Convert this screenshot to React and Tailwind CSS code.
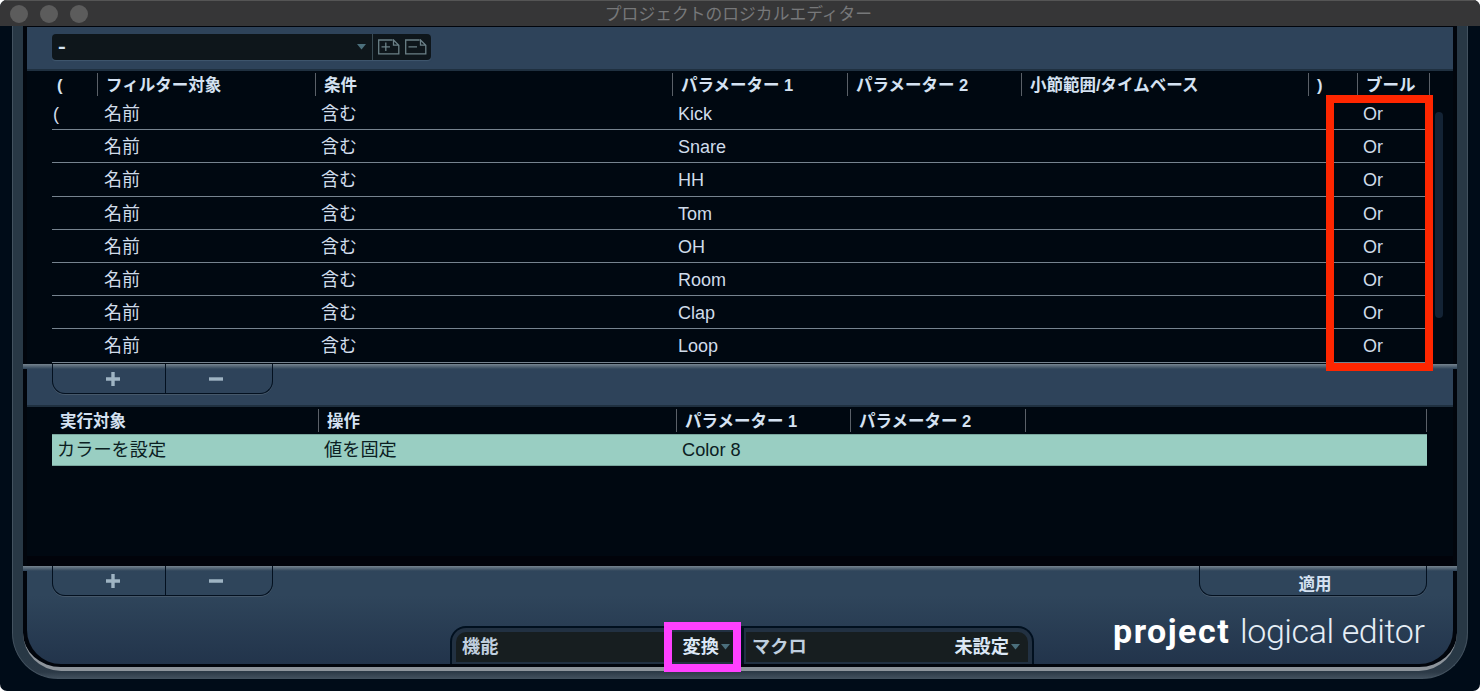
import React, { useState } from 'react';

const FILTER_ROWS = ['Kick', 'Snare', 'HH', 'Tom', 'OH', 'Room', 'Clap', 'Loop'];

const Triangle = () => (
  <svg className="shrink-0" width="9" height="6" viewBox="0 0 9 6">
    <path d="M0 0H9L4.5 5.5Z" fill="#4b6f7c" />
  </svg>
);

const PresetIcon = ({ plus }) => (
  <svg width="22" height="16" viewBox="0 0 22 16" fill="none" stroke="#6b8087" strokeWidth="1.3">
    <path d="M14.5 1H.7V14.8H20.8V6.2L15.5 1V6.2H20.8" />
    <path d="M3.5 7.8H12" />
    {plus && <path d="M7.8 3.5V12" />}
  </svg>
);

const AddRemove = ({ onAdd, onRemove }) => (
  <div className="flex w-[221px] h-[30px] rounded-b-[13px] border border-t-0 border-[#03101f] shadow-[0_1px_0_#46586a]">
    <button onClick={onAdd} className="w-[113px] border-r border-[#03101f] flex items-center justify-center pl-2">
      <svg width="14" height="14" viewBox="0 0 14 14">
        <path d="M0 7H14M7 0V14" stroke="#9fb4c3" strokeWidth="3.4" />
      </svg>
    </button>
    <button onClick={onRemove} className="flex-1 flex items-center justify-center pr-[7px]">
      <svg width="14" height="14" viewBox="0 0 14 14">
        <path d="M0 7H14" stroke="#9fb4c3" strokeWidth="3.4" />
      </svg>
    </button>
  </div>
);

// bright top edge, reaches 4px past the panel on both sides
const Highlight = () => (
  <div className="-mx-1 h-[5px] shrink-0 bg-gradient-to-b from-[#76848f] to-[#2f4459]" />
);

const HeadCell = ({ className = '', children }) => (
  <div className={`h-[23px] shrink-0 border-l border-[#5a6068] pl-2 pt-[2px] flex items-center ${className}`}>
    {children}
  </div>
);

const App = () => {
  const [rows, setRows] = useState(FILTER_ROWS);

  return (
    <div className="w-[1480px] h-[691px] bg-white overflow-hidden font-['Liberation_Sans','Noto_Sans_CJK_JP',sans-serif]">
      <div className="relative h-full flex flex-col overflow-hidden rounded-[7px] bg-[#000c18]">
        {/* Title bar */}
        <div className="h-[26px] shrink-0 flex items-center bg-[#363637] border-t border-[#555] pl-[10px]">
          <div className="flex shrink-0 w-[78px] gap-3">
            <span className="w-[18px] h-[18px] shrink-0 rounded-full bg-[#5c5c5c]" />
            <span className="w-[18px] h-[18px] shrink-0 rounded-full bg-[#5c5c5c]" />
            <span className="w-[18px] h-[18px] shrink-0 rounded-full bg-[#5c5c5c]" />
          </div>
          <div className="flex-1 text-center pr-[91px] pt-px text-[16.8px] leading-[25px] text-[#77787a]">
            プロジェクトのロジカルエディター
          </div>
        </div>

        {/* Window frame */}
        <div className="mx-3 h-[653px] shrink-0 rounded-b-[46px] border-x border-b border-[#43525f] bg-[linear-gradient(to_bottom,#283845_0,#283845_630px,#2c3a47_646px,#44525f_653px)] px-[10px] pb-[7px]">
          <div className="h-[645px] rounded-b-[38px] border-b-4 border-[#8d949b] overflow-hidden bg-[#01050c] px-1 pt-px pb-[3px] flex flex-col">
            {/* Preset bar */}
            <div className="h-11 shrink-0 bg-[#2e435a] border-b-2 border-[#1f3040] pl-[25px] pt-[7px]">
              <div className="flex w-[379px] h-[26px] rounded bg-[#0e161b] shadow-[0_1px_1px_#41586e]">
                <div className="w-[320px] flex items-center justify-between pl-[6px] pr-[6px] text-[18px] font-bold text-[#d5e4f3]">
                  <span className="inline-block scale-x-[1.3] origin-left">-</span>
                  <Triangle />
                </div>
                <div className="flex-1 border-l border-[#3a4b54] flex items-center gap-[5px] pl-[5px]">
                  <PresetIcon plus />
                  <PresetIcon />
                </div>
              </div>
            </div>

            {/* Filter conditions */}
            <div className="h-[293px] shrink-0 flex bg-[#000811] pl-[25px]">
              <div className="w-[1378px] shrink-0">
                <div className="h-[26px] flex pt-[2px] text-[16.5px] leading-[23px] font-bold text-[#d5e2f2] whitespace-nowrap">
                  <div className="w-[45px] shrink-0 pl-[5px] pt-px">(</div>
                  <HeadCell className="w-[218px]">フィルター対象</HeadCell>
                  <HeadCell className="w-[357px]">条件</HeadCell>
                  <HeadCell className="w-[175px]">パラメーター 1</HeadCell>
                  <HeadCell className="w-[174px]">パラメーター 2</HeadCell>
                  <HeadCell className="w-[287px]">小節範囲/タイムベース</HeadCell>
                  <HeadCell className="w-[49px]">)</HeadCell>
                  <HeadCell className="w-[73px] border-r">ブール</HeadCell>
                </div>
                <div className="w-[1375px] text-[18px] leading-[34px] text-[#d0dcea]">
                  {rows.map((name, i) => (
                    <div key={i} className="h-[33.2px] flex border-b-[1.5px] border-[#76838f]">
                      <div className="w-[52px] pl-px">{i === 0 ? '(' : ''}</div>
                      <div className="w-[217px]">名前</div>
                      <div className="w-[357px]">含む</div>
                      <div className="w-[685px]">{name}</div>
                      <div>Or</div>
                    </div>
                  ))}
                </div>
              </div>
              <div className="ml-[5px] mt-[41px] w-2 h-[206px] rounded-full bg-[#132335]" />
            </div>

            <div className="h-[43px] shrink-0 bg-[#2e435a] border-b-2 border-[#1f3040]">
              <Highlight />
              <div className="-mt-[5px] pl-[25px]">
                <AddRemove
                  onAdd={() => setRows([...rows, ''])}
                  onRemove={() => setRows(rows.slice(0, -1))}
                />
              </div>
            </div>

            {/* Actions */}
            <div className="h-[159px] shrink-0 bg-[#000811] border-b-[10px] border-[#01030a] pl-[25px]">
              <div className="h-[27px] flex pt-[2px] text-[16.5px] leading-[23px] font-bold text-[#d5e2f2] whitespace-nowrap">
                <div className="w-[266px] shrink-0 pl-2 pt-px">実行対象</div>
                <HeadCell className="w-[358px]">操作</HeadCell>
                <HeadCell className="w-[174px]">パラメーター 1</HeadCell>
                <HeadCell className="w-[175px]">パラメーター 2</HeadCell>
                <HeadCell className="w-[402px] border-r" />
              </div>
              <div className="w-[1375px] h-8 flex bg-[#99cec2] border-y border-[#79a69d] text-[18.2px] leading-[30px] text-[#0b2022]">
                <div className="w-[272px] pl-[5px]">カラーを設定</div>
                <div className="w-[358px]">値を固定</div>
                <div>Color 8</div>
              </div>
            </div>

            {/* Footer */}
            <div className="h-[98px] shrink-0 rounded-b-[34px] bg-gradient-to-b from-[#2f455b] from-30% to-[#22344b] flex flex-col">
              <Highlight />
              <div className="-mt-[5px] flex pl-[25px]">
                <AddRemove />
                <button className="ml-[926px] w-[228px] h-[30px] rounded-b-[13px] border border-t-0 border-[#03101f] shadow-[0_1px_0_#46586a] text-[16.5px] leading-[30px] pl-1 pt-[3px] font-bold text-[#d5e2f2]">
                  適用
                </button>
              </div>
              <div className="flex-1 flex items-end pl-[423px]">
                <div className="w-[584px] h-[38px] shrink-0 rounded-t-[16px] border-2 border-b-0 border-[#01101f] bg-[#223142] flex p-1 pb-[2px] text-[18.2px] leading-[28px] font-bold text-[#c0cfdf]">
                  <div className="w-[283px] rounded-tl-[10px] bg-[#171e20] flex items-center justify-between pl-[6px] pr-[9px]">
                    <span>機能</span>
                    <span className="flex items-center gap-[2px] text-[#dce8f6]">変換<Triangle /></span>
                  </div>
                  <div className="mx-[2px] -mt-1 -mb-[2px] w-[3px] bg-[#01101f]" />
                  <div className="flex-1 rounded-tr-[10px] bg-[#171e20] flex items-center justify-between pl-[6px] pr-2">
                    <span>マクロ</span>
                    <span className="flex items-center gap-[2px] text-[#dce8f6]">未設定<Triangle /></span>
                  </div>
                </div>
                <div className="ml-[79px] mb-[13px] flex font-['Roboto',sans-serif] text-[34px] leading-[40px] text-white whitespace-nowrap">
                  <span className="w-[127px] font-bold tracking-[1.5px]">project</span>
                  <span className="font-light tracking-[-0.4px] text-[#e6eef6]">logical editor</span>
                </div>
              </div>
            </div>
          </div>
        </div>

        {/* Callout boxes */}
        <div className="absolute left-[1326px] top-[95px] w-[107px] h-[276px] border-8 border-[#ff2600]" />
        <div className="absolute left-[664px] top-[622px] w-[77px] h-[50px] border-8 border-[#ff40ff]" />
      </div>
    </div>
  );
};

export default App;
